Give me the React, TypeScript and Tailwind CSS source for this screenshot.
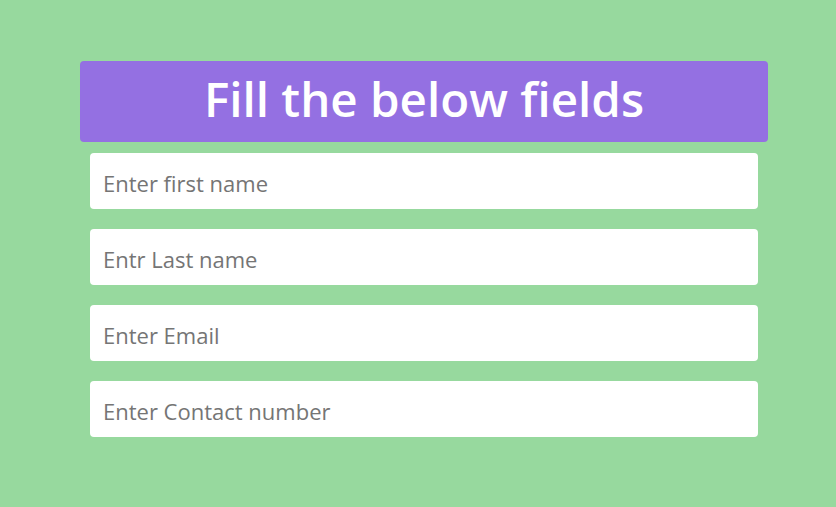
import React from "react";

export default function App() {
  const fields = ["Enter first name", "Entr Last name", "Enter Email", "Enter Contact number"];
  return (
    <div className="w-[836px] h-[507px] bg-[#97d99e] pt-[61px] pl-[80px]" style={{ fontFamily: '"Open Sans", "Noto Sans", sans-serif' }}>
      <div className="w-[688px]">
        <div className="h-[81px] bg-[#9470e2] rounded-[4px] flex items-center justify-center">
          <h1 className="text-white text-[47.5px] font-semibold leading-none pb-[6px]">Fill the below fields</h1>
        </div>
        <div className="flex flex-col gap-[20px] mt-[11px] px-[10px]">
          {fields.map((f) => (
            <input
              key={f}
              placeholder={f}
              className="h-[56px] w-full bg-white rounded-[4px] pl-[13px] pr-[13px] pt-[4px] text-[22px] placeholder:text-[#757575] outline-none"
            />
          ))}
        </div>
      </div>
    </div>
  );
}
